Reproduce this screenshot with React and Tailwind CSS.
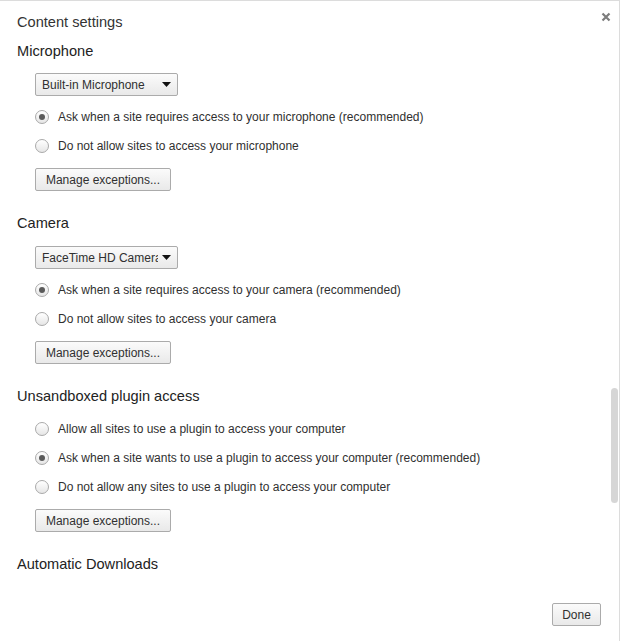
import React from 'react'

const font = { fontFamily: '"Liberation Sans", Arial, sans-serif' }

const Radio = ({ checked, label }) => (
  <label className="flex items-center h-5 gap-[9px]">
    <span className="w-[14px] h-[14px] rounded-full border border-[#a9a9a9] bg-gradient-to-b from-white to-[#e6e6e6] flex items-center justify-center shrink-0">
      {checked && <span className="w-[6px] h-[6px] rounded-full bg-[#5a5a5a]" />}
    </span>
    <span className="text-[12px] text-[#303030] whitespace-nowrap">{label}</span>
  </label>
)

const Select = ({ value }) => (
  <div className="w-[143px] h-[23px] rounded-[2px] border border-[#ababab] bg-gradient-to-b from-[#fbfbfb] to-[#e9e9e9] flex items-center pl-[6px] pr-[6px] gap-[4px]">
    <span className="flex-1 text-[12px] text-[#303030] whitespace-nowrap overflow-hidden">{value}</span>
    <svg width="9" height="5" viewBox="0 0 9 5" className="shrink-0">
      <path d="M0 0 H9 L4.5 5 Z" fill="#111" />
    </svg>
  </div>
)

const Button = ({ children, className = '' }) => (
  <button className={`h-[23px] rounded-[2px] border border-[#ababab] bg-gradient-to-b from-[#fbfbfb] to-[#e9e9e9] text-[12px] text-[#303030] whitespace-nowrap px-[8px] ${className}`}>
    {children}
  </button>
)

const Heading = ({ children }) => (
  <h2 className="text-[14.6px] leading-[22px] text-[#222]">{children}</h2>
)

const Section = ({ title, select, options, first }) => (
  <section className={first ? 'mt-[7px]' : 'mt-[21px]'}>
    <Heading>{title}</Heading>
    <div className="pl-[18px]">
      {select && (
        <div className={first ? 'mt-[11px]' : 'mt-[12px]'}>
          <Select value={select} />
        </div>
      )}
      <div className={`flex flex-col gap-[9px] ${select ? 'mt-[11px]' : 'mt-[12px]'}`}>
        {options.map((o) => (
          <Radio key={o.label} label={o.label} checked={o.checked} />
        ))}
      </div>
      <Button className="mt-[12px] w-[136px]">Manage exceptions...</Button>
    </div>
  </section>
)

export default function App() {
  return (
    <div style={font} className="relative w-[620px] h-[641px] bg-white border-t border-r border-[#dcdcdc] flex flex-col overflow-hidden">
      <button className="absolute right-[7px] top-[10px] w-[12px] h-[12px] flex items-center justify-center">
        <svg width="10" height="10" viewBox="0 0 10 10">
          <path d="M1.5 1.5 L8.5 8.5 M8.5 1.5 L1.5 8.5" stroke="#7d7d7d" strokeWidth="2.2" />
        </svg>
      </button>

      <div className="flex-1 overflow-hidden pl-[17px] pt-[10px]">
        <h1 className="text-[14.6px] leading-[22px] text-[#333]">Content settings</h1>

        <Section
          first
          title="Microphone"
          select="Built-in Microphone"
          options={[
            { label: 'Ask when a site requires access to your microphone (recommended)', checked: true },
            { label: 'Do not allow sites to access your microphone' },
          ]}
        />
        <Section
          title="Camera"
          select="FaceTime HD Camera (Built-in)"
          options={[
            { label: 'Ask when a site requires access to your camera (recommended)', checked: true },
            { label: 'Do not allow sites to access your camera' },
          ]}
        />
        <Section
          title="Unsandboxed plugin access"
          options={[
            { label: 'Allow all sites to use a plugin to access your computer' },
            { label: 'Ask when a site wants to use a plugin to access your computer (recommended)', checked: true },
            { label: 'Do not allow any sites to use a plugin to access your computer' },
          ]}
        />
        <section className="mt-[21px]">
          <Heading>Automatic Downloads</Heading>
        </section>
      </div>

      <div className="absolute left-[611px] top-[387px] w-[7px] h-[115px] rounded-full bg-[#d6d6d6]" />

      <div className="flex justify-end pr-[18px] pb-[15px] pt-[12px]">
        <Button className="w-[49px] px-0">Done</Button>
      </div>
    </div>
  )
}
